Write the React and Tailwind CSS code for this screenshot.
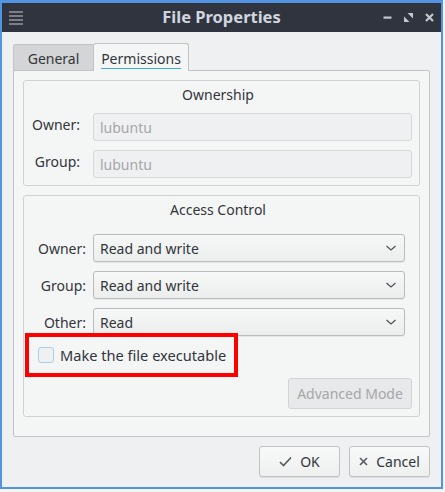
import React from "react";

const font = { fontFamily: '"Noto Sans", "Open Sans", sans-serif' };

function Chevron() {
  return (
    <svg width="12" height="8" viewBox="0 0 12 8" className="shrink-0">
      <path d="M1.5 2 L6 6 L10.5 2" fill="none" stroke="#4d5257" strokeWidth="1.2" />
    </svg>
  );
}

function Combo({ value }) {
  return (
    <div className="h-[28px] flex-1 flex items-center justify-between pl-[6px] pr-[7px] rounded-[3px] border border-[#b9bbbd] bg-gradient-to-b from-[#f6f7f7] to-[#eceded] shadow-[0_1px_0_rgba(0,0,0,0.06)] text-[14px] text-[#31363b]">
      <span>{value}</span>
      <Chevron />
    </div>
  );
}

export default function App() {
  return (
    <div className="w-[445px] h-[492px] bg-[#f4f5f6]" style={font}>
      <div className="w-[443px] h-[489px] border-2 border-t-[3px] border-[#5294e2] bg-[#eff0f1] flex flex-col">
        {/* title bar */}
        <div className="h-[29px] bg-[#2f343f] flex items-center shrink-0">
          <div className="w-[70px] pl-[7px] flex flex-col gap-[2px]">
            <div className="w-[14px] h-[2px] bg-[#7b7e84]" />
            <div className="w-[14px] h-[2px] bg-[#7b7e84]" />
            <div className="w-[14px] h-[2px] bg-[#7b7e84]" />
            <div className="w-[14px] h-[2px] bg-[#7b7e84]" />
          </div>
          <div className="flex-1 text-center text-[16.5px] font-bold text-[#cfd6df]">File Properties</div>
          <div className="w-[70px] flex items-center justify-end gap-[12px] pr-[7px]">
            <svg width="9" height="9" viewBox="0 0 9 9">
              <rect x="0.5" y="3.5" width="8" height="2.2" fill="#c3c8d0" />
            </svg>
            <svg width="9" height="9" viewBox="0 0 9 9">
              <polygon points="3.5,0 9,0 9,5.5" fill="#c3c8d0" />
              <polygon points="0,3.5 0,9 5.5,9" fill="#c3c8d0" />
            </svg>
            <svg width="9" height="9" viewBox="0 0 9 9">
              <path d="M1 1 L8 8 M8 1 L1 8" stroke="#c3c8d0" strokeWidth="2.2" />
            </svg>
          </div>
        </div>

        {/* body */}
        <div className="flex-1 flex flex-col px-[11px] pt-[11px] pb-[10px]">
          {/* tabs */}
          <div className="flex items-end h-[28px] -mb-[1px] relative z-10">
            <div className="h-[27px] w-[80px] flex items-center justify-center bg-[#d4d5d6] border border-[#c2c3c4] border-r-0 rounded-tl-[3px] text-[14px] text-[#31363b]">
              <span className="mt-[1px]">General</span>
            </div>
            <div className="h-[28px] w-[96px] flex items-center justify-center bg-[#f4f5f5] border border-[#c2c3c4] border-b-0 rounded-t-[3px] text-[14px] text-[#31363b]">
              <span className="border-b border-[#3daee9] leading-[19px] mt-[2px]">Permissions</span>
            </div>
          </div>

          {/* pane */}
          <div className="flex-1 border border-[#c2c3c4] rounded-[2px] bg-[#f4f5f5] px-[9px] pt-[9px] flex flex-col gap-[9px]">
            {/* ownership */}
            <div className="border border-[#d0d1d2] rounded-[3px] pt-[3px] pb-[7px] pr-[7px]">
              <div className="h-[20px] flex items-center justify-center text-[14px] text-[#31363b]">Ownership</div>
              <div className="mt-[9px] grid grid-cols-[56px_1fr] gap-x-[13px] gap-y-[9px] items-start">
                <div className="text-right text-[14px] text-[#31363b] leading-[20px] pt-[2px]">Owner:</div>
                <div className="h-[28px] rounded-[3px] border border-[#d6d7d8] bg-[#eff0f1] flex items-center pl-[6px] text-[14px] text-[#a5a7a9]">lubuntu</div>
                <div className="text-right text-[14px] text-[#31363b] leading-[20px] pt-[2px]">Group:</div>
                <div className="h-[28px] rounded-[3px] border border-[#d6d7d8] bg-[#eff0f1] flex items-center pl-[6px] text-[14px] text-[#a5a7a9]">lubuntu</div>
              </div>
            </div>

            {/* access control */}
            <div className="border border-[#d0d1d2] rounded-[3px] pt-[3px] pb-[7px] pr-[7px] relative">
              <div className="h-[20px] flex items-center justify-center text-[14px] text-[#31363b]">Access Control</div>
              <div className="mt-[15px] pr-[7px] flex flex-col gap-[9px]">
                {[
                  ["Owner:", "Read and write"],
                  ["Group:", "Read and write"],
                  ["Other:", "Read"],
                ].map(([l, v]) => (
                  <div key={l} className="flex items-center gap-[7px]">
                    <div className="w-[62px] text-right text-[14px] text-[#31363b]">{l}</div>
                    <Combo value={v} />
                  </div>
                ))}
              </div>
              <div className="mt-[10px] flex items-center gap-[6px] pl-[14px]">
                <div className="w-[16px] h-[16px] rounded-[3px] border border-[#a9cfe8] bg-[#eff0f1]" />
                <span className="text-[14.6px] text-[#31363b] leading-[16px] mt-[1px]">Make the file executable</span>
              </div>
              <div className="mt-[15px] flex justify-end">
                <div className="h-[31px] w-[124px] rounded-[3px] border border-[#d3d4d5] bg-[#e8e9ea] flex items-center justify-center text-[14px] text-[#a5a7a9]">
                  Advanced Mode
                </div>
              </div>
              {/* red annotation */}
              <div className="absolute left-[1px] top-[137px] w-[213px] h-[44px] border-4 border-[#ff0000] pointer-events-none" />
            </div>
          </div>

          {/* buttons */}
          <div className="pt-[9px] flex justify-end gap-[9px]">
            <div className="h-[31px] w-[81px] rounded-[3px] border border-[#c0c2c4] bg-gradient-to-b from-[#f8f9f9] to-[#eeefef] shadow-[0_1px_0_rgba(0,0,0,0.08)] flex items-center justify-center gap-[8px] text-[14px] text-[#31363b]">
              <svg width="13" height="11" viewBox="0 0 13 11">
                <path d="M1 6 L4.5 9.5 L12 1.5" fill="none" stroke="#555a5f" strokeWidth="1.6" />
              </svg>
              <span>OK</span>
            </div>
            <div className="h-[31px] w-[81px] rounded-[3px] border border-[#c0c2c4] bg-gradient-to-b from-[#f8f9f9] to-[#eeefef] shadow-[0_1px_0_rgba(0,0,0,0.08)] flex items-center justify-center gap-[8px] text-[14px] text-[#31363b]">
              <svg width="9" height="9" viewBox="0 0 9 9">
                <path d="M1 1 L8 8 M8 1 L1 8" stroke="#555a5f" strokeWidth="1.6" />
              </svg>
              <span>Cancel</span>
            </div>
          </div>
        </div>
      </div>
    </div>
  );
}
